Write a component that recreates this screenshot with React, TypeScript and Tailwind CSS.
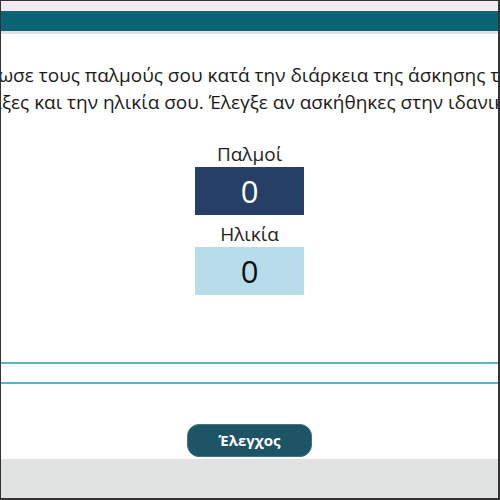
import React from 'react';

const Field: React.FC<{ label: string; value: string; dark?: boolean }> = ({ label, value, dark }) => (
  <div className="flex flex-col items-center">
    <div className="text-[19px] leading-[26px] text-[#222]">{label}</div>
    <div
      className={`w-[109px] h-[48px] flex items-center justify-center text-[31px] ${
        dark ? 'bg-[#253f66] text-white' : 'bg-[#b6dde9] text-[#111]'
      }`}
    >
      {value}
    </div>
  </div>
);

export default function App() {
  return (
    <div
      className="w-[500px] h-[500px] overflow-hidden bg-white border border-[#333] border-r-2 border-b-2 flex flex-col"
      style={{ fontFamily: '"Open Sans", "Liberation Sans", sans-serif' }}
    >
      <div className="h-[10px] bg-[#f2ecf0] shrink-0" />
      <div className="h-[20px] bg-[#0b6474] shrink-0" />
      <div className="h-[3px] bg-[#dde2e6] shrink-0" />

      {/* instructions overflow the frame on both sides */}
      <div className="mt-[28px] flex flex-col text-[19px] leading-[27px] text-[#1a1a1a]">
        <div className="flex justify-center whitespace-nowrap">
          <span className="pr-[28px]">Σημείωσε τους παλμούς σου κατά την διάρκεια της άσκησης του</span>
        </div>
        <div className="flex justify-center whitespace-nowrap">
          <span className="pl-[30px]">έπαιξες και την ηλικία σου. Έλεγξε αν ασκήθηκες στην ιδανική ζώνη</span>
        </div>
      </div>

      <div className="mt-[25px] flex flex-col items-center gap-[6px]">
        <Field label="Παλμοί" value="0" dark />
        <Field label="Ηλικία" value="0" />
      </div>

      <div className="mt-[67px] h-[2px] bg-[#5fb0c0] shrink-0" />
      <div className="mt-[18px] h-[2px] bg-[#5fb0c0] shrink-0" />

      <div className="flex-1 flex items-start justify-center pt-[40px]">
        <button className="w-[125px] h-[33px] rounded-xl bg-[#1d5566] border border-[#3c7585] text-white font-bold text-[15px]">
          Έλεγχος
        </button>
      </div>

      <div className="h-[39px] bg-[#e1e2e2] shrink-0" />
    </div>
  );
}
